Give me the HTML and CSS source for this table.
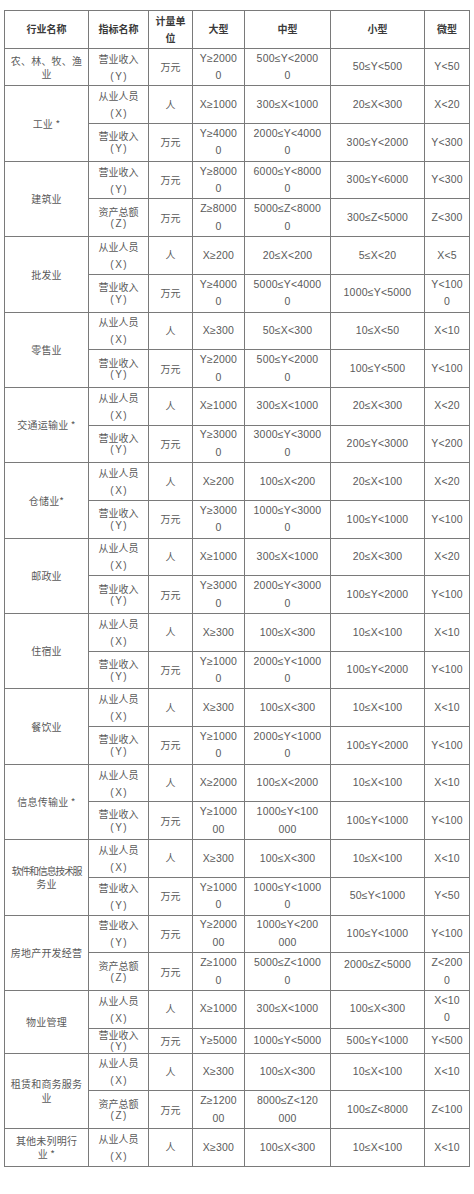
FILE: index.html
```html
<!DOCTYPE html>
<html lang="zh-CN">
<head>
<meta charset="utf-8">
<title>统计上大中小微型企业划分标准</title>
<link rel="stylesheet" href="styles.css">
</head>
<body>
<table class="grid">
<colgroup>
<col class="c1"><col class="c2"><col class="c3"><col class="c4"><col class="c5"><col class="c6"><col class="c7">
</colgroup>
<thead>
<tr class="row">
<th>行业名称</th><th>指标名称</th><th class="hl">计量单<br>位</th><th>大型</th><th>中型</th><th>小型</th><th>微型</th>
</tr>
</thead>
<tbody>
<tr class="row"><td class="ind">农、林、牧、渔<br>业</td><td class="lab lo">营业收入<br><span class="p">(Y)</span></td><td class="u">万元</td><td class="n">Y≥2000<br>0</td><td class="n">500≤Y&lt;2000<br>0</td><td class="n">50≤Y&lt;500</td><td class="n">Y&lt;50</td></tr>

<tr class="row"><td class="ind" rowspan="2">工业 *</td><td class="lab lo">从业人员<br><span class="p">(X)</span></td><td class="u">人</td><td class="n">X≥1000</td><td class="n">300≤X&lt;1000</td><td class="n">20≤X&lt;300</td><td class="n">X&lt;20</td></tr>
<tr class="row"><td class="lab ti">营业收入<br><span class="p">(Y)</span></td><td class="u">万元</td><td class="n">Y≥4000<br>0</td><td class="n">2000≤Y&lt;4000<br>0</td><td class="n">300≤Y&lt;2000</td><td class="n">Y&lt;300</td></tr>

<tr class="row"><td class="ind" rowspan="2">建筑业</td><td class="lab lo">营业收入<br><span class="p">(Y)</span></td><td class="u">万元</td><td class="n">Y≥8000<br>0</td><td class="n">6000≤Y&lt;8000<br>0</td><td class="n">300≤Y&lt;6000</td><td class="n">Y&lt;300</td></tr>
<tr class="row"><td class="lab ti">资产总额<br><span class="p">(Z)</span></td><td class="u">万元</td><td class="n">Z≥8000<br>0</td><td class="n">5000≤Z&lt;8000<br>0</td><td class="n">300≤Z&lt;5000</td><td class="n">Z&lt;300</td></tr>

<tr class="row"><td class="ind" rowspan="2">批发业</td><td class="lab lo">从业人员<br><span class="p">(X)</span></td><td class="u">人</td><td class="n">X≥200</td><td class="n">20≤X&lt;200</td><td class="n">5≤X&lt;20</td><td class="n">X&lt;5</td></tr>
<tr class="row"><td class="lab ti">营业收入<br><span class="p">(Y)</span></td><td class="u">万元</td><td class="n">Y≥4000<br>0</td><td class="n">5000≤Y&lt;4000<br>0</td><td class="n">1000≤Y&lt;5000</td><td class="n">Y&lt;100<br>0</td></tr>

<tr class="row"><td class="ind" rowspan="2">零售业</td><td class="lab lo">从业人员<br><span class="p">(X)</span></td><td class="u">人</td><td class="n">X≥300</td><td class="n">50≤X&lt;300</td><td class="n">10≤X&lt;50</td><td class="n">X&lt;10</td></tr>
<tr class="row"><td class="lab ti">营业收入<br><span class="p">(Y)</span></td><td class="u">万元</td><td class="n">Y≥2000<br>0</td><td class="n">500≤Y&lt;2000<br>0</td><td class="n">100≤Y&lt;500</td><td class="n">Y&lt;100</td></tr>

<tr class="row"><td class="ind" rowspan="2">交通运输业 *</td><td class="lab lo">从业人员<br><span class="p">(X)</span></td><td class="u">人</td><td class="n">X≥1000</td><td class="n">300≤X&lt;1000</td><td class="n">20≤X&lt;300</td><td class="n">X&lt;20</td></tr>
<tr class="row"><td class="lab ti">营业收入<br><span class="p">(Y)</span></td><td class="u">万元</td><td class="n">Y≥3000<br>0</td><td class="n">3000≤Y&lt;3000<br>0</td><td class="n">200≤Y&lt;3000</td><td class="n">Y&lt;200</td></tr>

<tr class="row"><td class="ind" rowspan="2">仓储业*</td><td class="lab lo">从业人员<br><span class="p">(X)</span></td><td class="u">人</td><td class="n">X≥200</td><td class="n">100≤X&lt;200</td><td class="n">20≤X&lt;100</td><td class="n">X&lt;20</td></tr>
<tr class="row"><td class="lab ti">营业收入<br><span class="p">(Y)</span></td><td class="u">万元</td><td class="n">Y≥3000<br>0</td><td class="n">1000≤Y&lt;3000<br>0</td><td class="n">100≤Y&lt;1000</td><td class="n">Y&lt;100</td></tr>

<tr class="row"><td class="ind" rowspan="2">邮政业</td><td class="lab lo">从业人员<br><span class="p">(X)</span></td><td class="u">人</td><td class="n">X≥1000</td><td class="n">300≤X&lt;1000</td><td class="n">20≤X&lt;300</td><td class="n">X&lt;20</td></tr>
<tr class="row"><td class="lab ti">营业收入<br><span class="p">(Y)</span></td><td class="u">万元</td><td class="n">Y≥3000<br>0</td><td class="n">2000≤Y&lt;3000<br>0</td><td class="n">100≤Y&lt;2000</td><td class="n">Y&lt;100</td></tr>

<tr class="row"><td class="ind" rowspan="2">住宿业</td><td class="lab lo">从业人员<br><span class="p">(X)</span></td><td class="u">人</td><td class="n">X≥300</td><td class="n">100≤X&lt;300</td><td class="n">10≤X&lt;100</td><td class="n">X&lt;10</td></tr>
<tr class="row"><td class="lab ti">营业收入<br><span class="p">(Y)</span></td><td class="u">万元</td><td class="n">Y≥1000<br>0</td><td class="n">2000≤Y&lt;1000<br>0</td><td class="n">100≤Y&lt;2000</td><td class="n">Y&lt;100</td></tr>

<tr class="row"><td class="ind" rowspan="2">餐饮业</td><td class="lab lo">从业人员<br><span class="p">(X)</span></td><td class="u">人</td><td class="n">X≥300</td><td class="n">100≤X&lt;300</td><td class="n">10≤X&lt;100</td><td class="n">X&lt;10</td></tr>
<tr class="row"><td class="lab ti">营业收入<br><span class="p">(Y)</span></td><td class="u">万元</td><td class="n">Y≥1000<br>0</td><td class="n">2000≤Y&lt;1000<br>0</td><td class="n">100≤Y&lt;2000</td><td class="n">Y&lt;100</td></tr>

<tr class="row"><td class="ind" rowspan="2">信息传输业 *</td><td class="lab lo">从业人员<br><span class="p">(X)</span></td><td class="u">人</td><td class="n">X≥2000</td><td class="n">100≤X&lt;2000</td><td class="n">10≤X&lt;100</td><td class="n">X&lt;10</td></tr>
<tr class="row"><td class="lab mid">营业收入<br><span class="p">(Y)</span></td><td class="u">万元</td><td class="n">Y≥1000<br>00</td><td class="n">1000≤Y&lt;100<br>000</td><td class="n">100≤Y&lt;1000</td><td class="n">Y&lt;100</td></tr>

<tr class="row"><td class="ind" rowspan="2"><span class="cond">软件和信息技术服</span><br>务业</td><td class="lab lo">从业人员<br><span class="p">(X)</span></td><td class="u">人</td><td class="n">X≥300</td><td class="n">100≤X&lt;300</td><td class="n">10≤X&lt;100</td><td class="n">X&lt;10</td></tr>
<tr class="row"><td class="lab lo">营业收入<br><span class="p">(Y)</span></td><td class="u">万元</td><td class="n">Y≥1000<br>0</td><td class="n">1000≤Y&lt;1000<br>0</td><td class="n">50≤Y&lt;1000</td><td class="n">Y&lt;50</td></tr>

<tr class="row"><td class="ind" rowspan="2">房地产开发经营</td><td class="lab lo">营业收入<br><span class="p">(Y)</span></td><td class="u">万元</td><td class="n">Y≥2000<br>00</td><td class="n">1000≤Y&lt;200<br>000</td><td class="n">100≤Y&lt;1000</td><td class="n">Y&lt;100</td></tr>
<tr class="row"><td class="lab ti">资产总额<br><span class="p">(Z)</span></td><td class="u">万元</td><td class="n">Z≥1000<br>0</td><td class="n">5000≤Z&lt;1000<br>0</td><td class="n top">2000≤Z&lt;5000</td><td class="n">Z&lt;200<br>0</td></tr>

<tr class="row"><td class="ind" rowspan="2">物业管理</td><td class="lab lo">从业人员<br><span class="p">(X)</span></td><td class="u">人</td><td class="n">X≥1000</td><td class="n">300≤X&lt;1000</td><td class="n">100≤X&lt;300</td><td class="n">X&lt;10<br>0</td></tr>
<tr class="row short"><td class="lab ti">营业收入<br><span class="p">(Y)</span></td><td class="u">万元</td><td class="n">Y≥5000</td><td class="n">1000≤Y&lt;5000</td><td class="n">500≤Y&lt;1000</td><td class="n">Y&lt;500</td></tr>

<tr class="row"><td class="ind" rowspan="2">租赁和商务服务<br>业</td><td class="lab lo">从业人员<br><span class="p">(X)</span></td><td class="u">人</td><td class="n">X≥300</td><td class="n">100≤X&lt;300</td><td class="n">10≤X&lt;100</td><td class="n">X&lt;10</td></tr>
<tr class="row"><td class="lab ti">资产总额<br><span class="p">(Z)</span></td><td class="u">万元</td><td class="n">Z≥1200<br>00</td><td class="n">8000≤Z&lt;120<br>000</td><td class="n">100≤Z&lt;8000</td><td class="n">Z&lt;100</td></tr>

<tr class="row"><td class="ind">其他未列明行<br>业 *</td><td class="lab lo">从业人员<br><span class="p">(X)</span></td><td class="u">人</td><td class="n">X≥300</td><td class="n">100≤X&lt;300</td><td class="n">10≤X&lt;100</td><td class="n">X&lt;10</td></tr>
</tbody>
</table>
</body>
</html>
```

FILE: styles.css
```css
html, body {
  margin: 0;
  padding: 0;
  background: #ffffff;
}

body {
  font-family: "Noto Sans CJK SC", "Liberation Sans", sans-serif;
  color: #5a5a5a;
}

.grid {
  margin: 10px 0 0 4px;
  width: 465px;
  table-layout: fixed;
  border-collapse: collapse;
  border: 1px solid #707070;
}

.c1 { width: 84px; }
.c2 { width: 60px; }
.c3 { width: 44px; }
.c4 { width: 52px; }
.c5 { width: 86px; }
.c6 { width: 94px; }
.c7 { width: 45px; }

.grid th,
.grid td {
  border: 1px solid #7a7a7a;
  padding: 0;
  text-align: center;
  vertical-align: middle;
  overflow: hidden;
  white-space: nowrap;
}

.row { height: 37.7px; }
.row.short { height: 25px; }

.grid th {
  font-size: 10px;
  font-weight: 700;
  color: #3a3a3a;
  line-height: 14px;
}

.grid th.hl { line-height: 17px; }

.ind {
  font-size: 10px;
  line-height: 13.5px;
  letter-spacing: 0.2px;
}

.cond {
  letter-spacing: -1.3px;
}

.lab {
  font-size: 10px;
}

.lab .p {
  font-family: "Liberation Sans", sans-serif;
  letter-spacing: 1.5px;
  padding-left: 1.5px;
}

.lab.lo { line-height: 17px; }
.lab.ti { line-height: 11.5px; }
.lab.mid { line-height: 13px; }

.u {
  font-size: 10px;
  line-height: 14px;
}

.n {
  font-family: "Liberation Sans", "Noto Sans CJK SC", sans-serif;
  font-size: 10.5px;
  line-height: 17.5px;
  letter-spacing: 0.2px;
}

.n.top {
  vertical-align: top;
  padding-top: 3px;
}
```
